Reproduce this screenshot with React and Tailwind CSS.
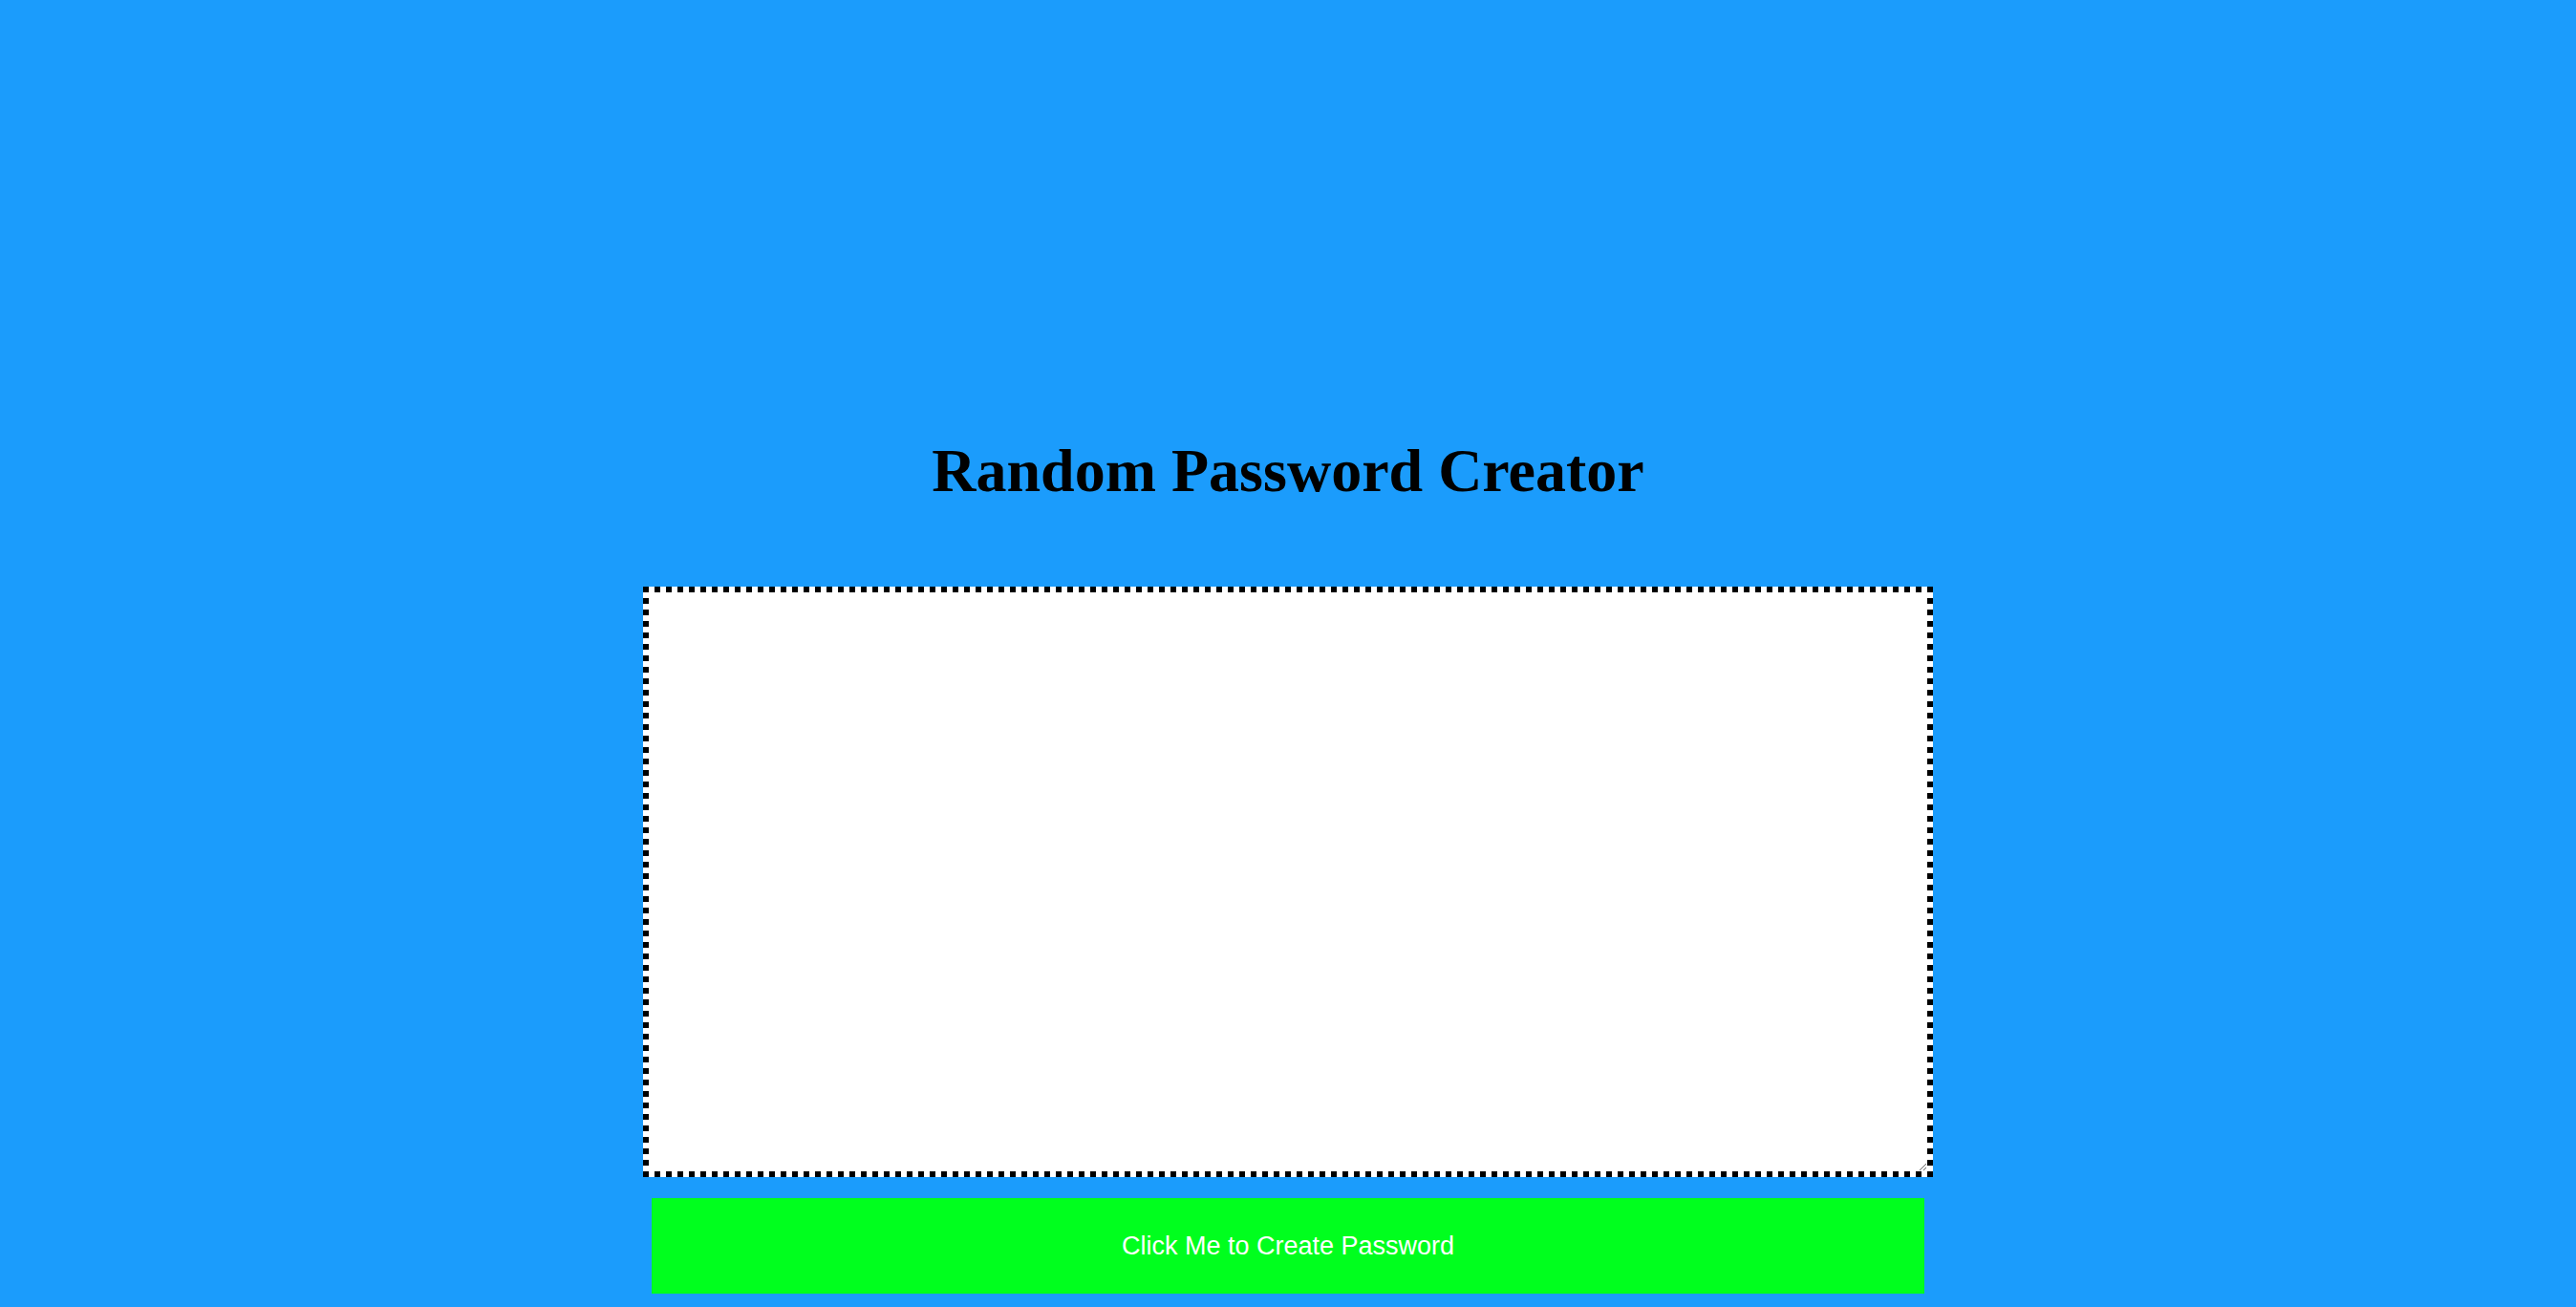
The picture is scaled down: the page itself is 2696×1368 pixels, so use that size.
export default function App() {
  return (
    <div className="min-h-screen bg-[#1b9cfc] flex flex-col items-center pt-[456px]">
      <h1 className="font-['Liberation_Serif',serif] font-bold text-[64px] leading-[74px] text-black">
        Random Password Creator
      </h1>
      {/* square-dotted frame */}
      <div className="mt-[84px] w-[1350px] h-[618px] p-[6px] bg-[conic-gradient(#000_25%,#fff_0_50%,#000_0_75%,#fff_0)] bg-[length:12px_12px] bg-[position:6px_0]">
        <textarea className="block w-full h-full bg-white outline-none border-0" />
      </div>
      <button className="mt-[22px] w-[1332px] h-[100px] bg-[#00ff1e] text-white text-[27px] font-['Liberation_Sans',Arial,sans-serif]">
        Click Me to Create Password
      </button>
    </div>
  );
}
